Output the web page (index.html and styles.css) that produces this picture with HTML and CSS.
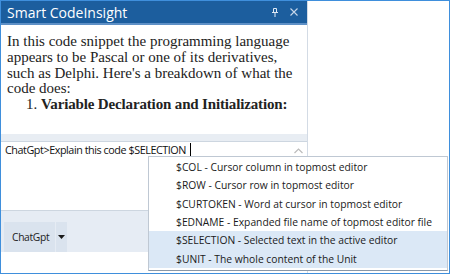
FILE: index.html
```html
<!DOCTYPE html>
<html>
<head>
<meta charset="utf-8">
<link rel="stylesheet" href="styles.css">
</head>
<body>
<div class="frame">
  <div class="panel">
    <div class="titlebar">
      <span class="title">Smart CodeInsight</span>
      <span class="tools">
        <svg class="pin" width="6" height="9" viewBox="0 0 6 9"><path d="M1.5 0.5h3v4h-3z M0 4.5h6 M3 4.5v4.5" fill="none" stroke="#dfe9f5" stroke-width="1"/></svg>
        <svg class="close" width="8" height="8" viewBox="0 0 8 8"><path d="M0.5 0.5L7.5 7.5M7.5 0.5L0.5 7.5" stroke="#c6d6ea" stroke-width="1.1"/></svg>
      </span>
    </div>
    <div class="content">
      <p class="para">In this code snippet the programming language<br>appears to be Pascal or one of its derivatives,<br>such as Delphi. Here's a breakdown of what the<br>code does:</p>
      <ol class="steps"><li><b>Variable Declaration and Initialization:</b></li></ol>
    </div>
    <div class="sep"></div>
    <div class="input">
      <div class="prompt">ChatGpt&gt;Explain this code $SELECTION<span class="caret"></span></div>
      <div class="scroll"><svg width="9" height="6" viewBox="0 0 9 6"><path d="M0.5 5L4.5 1L8.5 5" fill="none" stroke="#bcbcbc" stroke-width="1.2"/></svg></div>
    </div>
    <div class="toolbar">
      <div class="btn"><span class="btn-label">ChatGpt</span><span class="btn-drop"><svg width="7" height="4" viewBox="0 0 7 4"><path d="M0 0h7L3.5 4z" fill="#1a1a1a"/></svg></span></div>
    </div>
    <div class="foot"></div>
  </div>
  <div class="popup">
    <div class="item">$COL - Cursor column in topmost editor</div>
    <div class="item">$ROW - Cursor row in topmost editor</div>
    <div class="item">$CURTOKEN - Word at cursor in topmost editor</div>
    <div class="item">$EDNAME - Expanded file name of topmost editor file</div>
    <div class="item sel">$SELECTION - Selected text in the active editor</div>
    <div class="item sel">$UNIT - The whole content of the Unit</div>
  </div>
</div>
</body>
</html>
```
FILE: styles.css
```css
html, body { margin: 0; padding: 0; }
body { width: 450px; height: 274px; overflow: hidden; background: #fff; }
.frame {
  position: relative;
  box-sizing: border-box;
  width: 450px; height: 274px;
  border: 1px solid #3f8fdc;
  display: flex;
  background: #fff;
}
.panel {
  width: 306px;
  border-right: 1px solid #d3dbe5;
  display: flex;
  flex-direction: column;
}
.titlebar {
  height: 22px;
  background: #1c5e9e;
  border-bottom: 2px solid #5e90c6;
  display: flex;
  align-items: center;
  justify-content: space-between;
  padding: 0 9px 0 6px;
}
.title {
  font-family: "Open Sans", sans-serif;
  font-size: 14px;
  color: #fff;
}
.tools { display: flex; align-items: center; gap: 12px; }
.pin { margin-top: 1px; }
.content {
  height: 109px;
  overflow: hidden;
  font-family: "Liberation Serif", serif;
  font-size: 15px;
  color: #222;
  padding: 0 6px;
}
.para { margin: 9px 0 0 0; line-height: 15.8px; white-space: nowrap; }
.steps { margin: 0; padding-left: 34px; line-height: 15.8px; white-space: nowrap; }
.steps b { letter-spacing: -0.15px; }
.sep { height: 7px; background: #e8edf3; }
.input {
  height: 68px;
  border-top: 1px solid #cdd6e0;
  border-bottom: 1px solid #cdd6e0;
  display: flex;
  justify-content: space-between;
}
.prompt {
  font-family: "Open Sans", sans-serif;
  font-size: 10.8px;
  letter-spacing: -0.45px;
  color: #111;
  padding: 0 0 0 4px;
  line-height: 16px;
  display: flex;
  align-items: center;
  height: 16px;
}
.caret { width: 1px; height: 14px; background: #000; margin-left: 4px; }
.scroll { width: 18px; padding-top: 6px; display: flex; justify-content: center; }
.toolbar {
  height: 41px;
  background: #e6ecf4;
  display: flex;
  align-items: flex-end;
  padding: 0 0 0 3px;
}
.btn {
  height: 30px;
  width: 63px;
  background: #dae3ee;
  display: flex;
  align-items: center;
}
.btn-label {
  font-family: "Open Sans", sans-serif;
  font-size: 10.3px;
  letter-spacing: -0.35px;
  color: #222;
  padding-left: 8px;
  width: 43px;
}
.btn-drop {
  height: 100%;
  border-left: 1px solid #e6ecf4;
  flex: 1;
  display: flex;
  align-items: center;
  justify-content: center;
}
.foot { height: 20px; }
.popup {
  position: absolute;
  left: 147px; top: 155px;
  box-sizing: border-box;
  width: 300px; height: 115px;
  border: 1px solid #bfc8d3;
  border-bottom-color: #8a98a8;
  background: #fff;
  padding-top: 1px;
}
.item {
  height: 18.35px;
  line-height: 18.35px;
  padding-left: 27px;
  font-family: "Open Sans", sans-serif;
  font-size: 10.3px;
  color: #1a1a1a;
  white-space: nowrap;
}
.item.sel { background: #dbe8f6; }
```
